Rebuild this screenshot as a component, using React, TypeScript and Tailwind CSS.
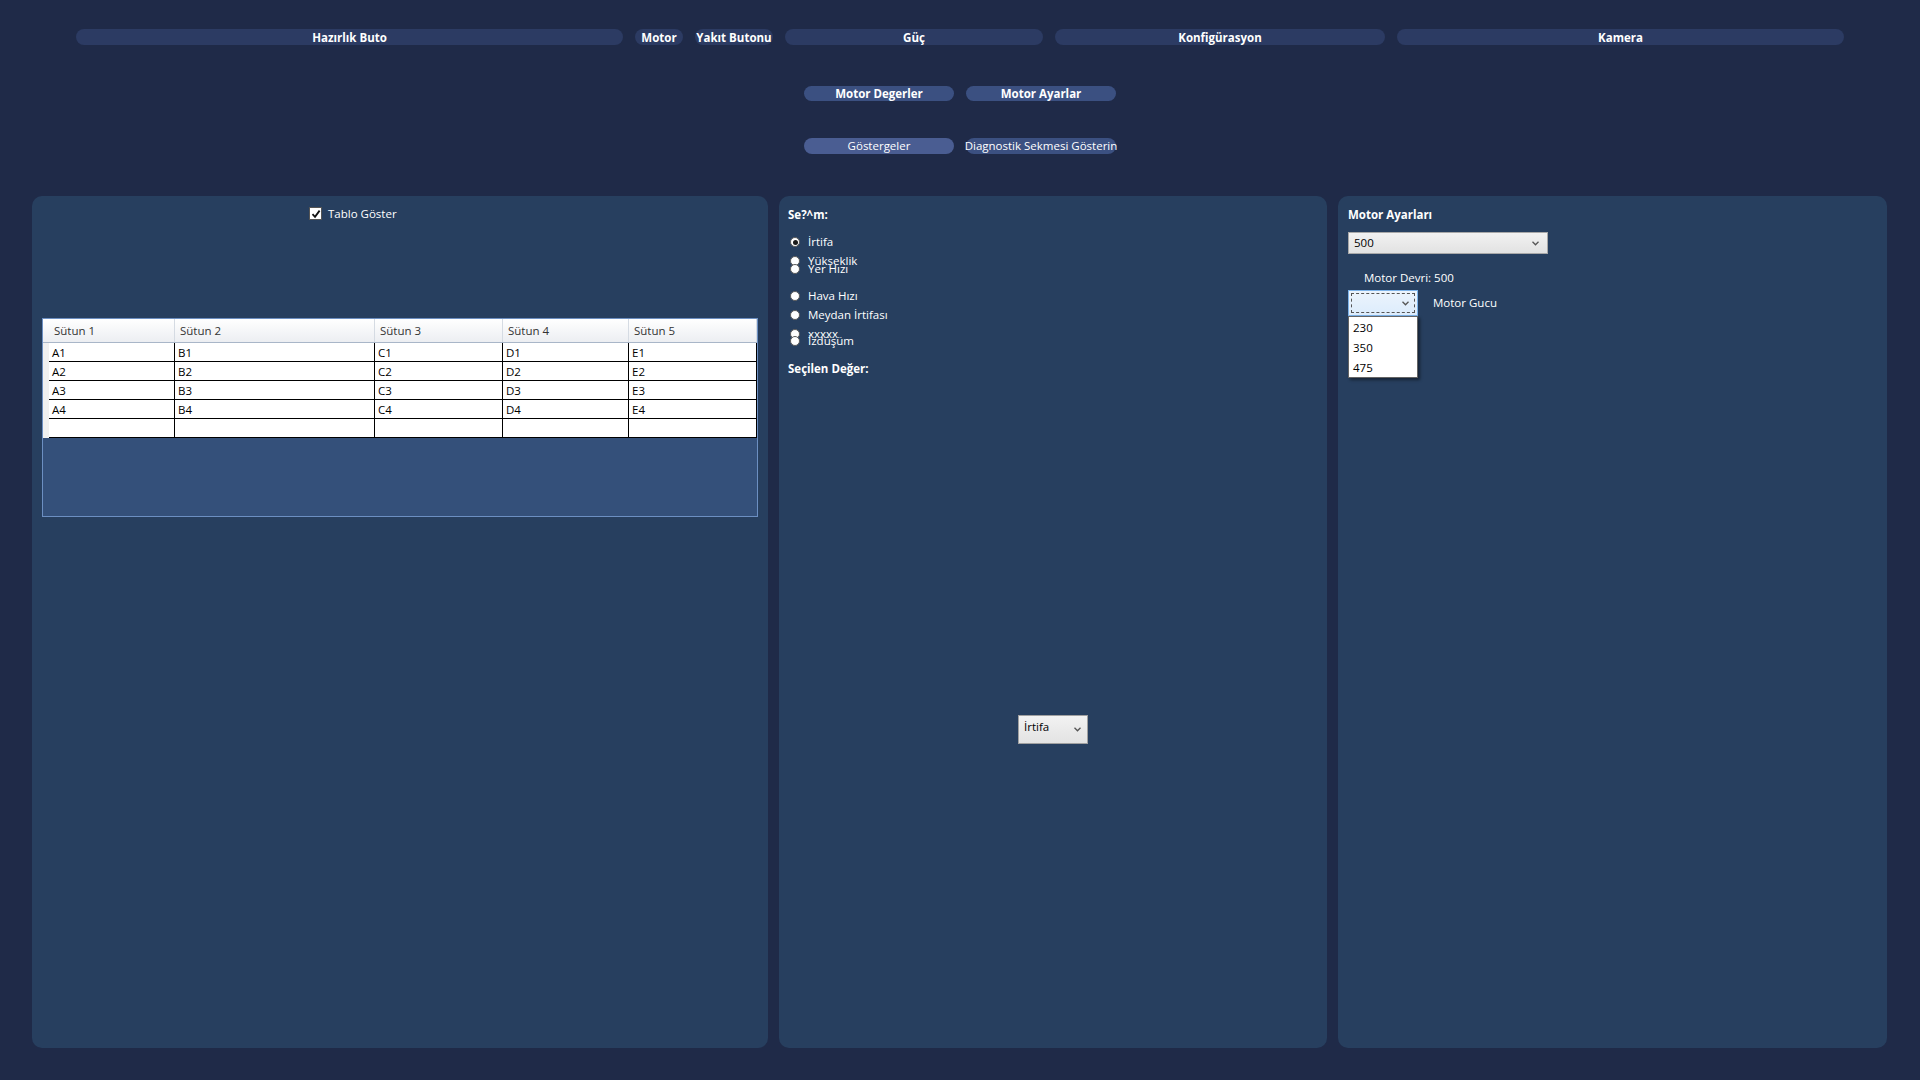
import React from 'react'

const font = "font-['Segoe_UI','Open_Sans',sans-serif]"

const topButtons = [
  { label: 'Hazırlık Buto', w: 'w-[547px]' },
  { label: 'Motor', w: 'w-[48px]' },
  { label: 'Yakıt Butonu', w: 'w-[78px]' },
  { label: 'Güç', w: 'w-[258px]' },
  { label: 'Konfigürasyon', w: 'w-[330px]' },
  { label: 'Kamera', w: 'w-[447px]' },
]

const columns = [
  { name: 'Sütun 1', w: 'w-[126px]' },
  { name: 'Sütun 2', w: 'w-[200px]' },
  { name: 'Sütun 3', w: 'w-[128px]' },
  { name: 'Sütun 4', w: 'w-[126px]' },
  { name: 'Sütun 5', w: 'w-[128px]' },
]

const rows = [
  ['A1', 'B1', 'C1', 'D1', 'E1'],
  ['A2', 'B2', 'C2', 'D2', 'E2'],
  ['A3', 'B3', 'C3', 'D3', 'E3'],
  ['A4', 'B4', 'C4', 'D4', 'E4'],
  ['', '', '', '', ''],
]

function Chevron() {
  return (
    <svg width="7" height="5" viewBox="0 0 7 5" className="shrink-0">
      <path d="M0.5 0.8 L3.5 3.8 L6.5 0.8" fill="none" stroke="#555" strokeWidth="1.3" />
    </svg>
  )
}

function Radio({ label, checked, className }: { label: string; checked?: boolean; className: string }) {
  return (
    <div className={`flex items-center h-[16px] ${className}`}>
      <span className="w-[10px] h-[10px] rounded-full bg-white border border-[#5a5a5a] flex items-center justify-center ml-[2px]">
        {checked && <span className="w-[5px] h-[5px] rounded-full bg-[#1a1a1a]" />}
      </span>
      <span className="ml-[8px] text-[11.5px] text-white leading-[16px]">{label}</span>
    </div>
  )
}

function DataTable() {
  return (
    <div className="mt-[96px] ml-[10px] w-[716px] h-[199px] bg-[#34507a] border border-[#6c8fc2]">
      <div className="flex h-[24px] bg-gradient-to-b from-white to-[#eceef2] border-b border-[#a9b6c8]">
        <div className="w-[6px]" />
        {columns.map((c) => (
          <div
            key={c.name}
            className={`${c.w} border-r border-[#d5dbe3] pl-[5px] flex items-center text-[11.5px] text-[#333]`}
          >
            {c.name}
          </div>
        ))}
      </div>
      {rows.map((r, i) => (
        <div key={i} className="flex h-[19px]">
          <div className="w-[6px] bg-[#f0f0f0]" />
          {r.map((cell, j) => (
            <div
              key={j}
              className={`${columns[j].w} bg-white border-r border-b border-black pl-[3px] flex items-center text-[11.5px] text-black`}
            >
              {cell}
            </div>
          ))}
        </div>
      ))}
    </div>
  )
}

export default function App() {
  return (
    <div className={`${font} w-[1920px] h-[1080px] bg-[#1f2a48] flex flex-col`}>
      <div className="flex justify-center gap-[12px] pt-[29px]">
        {topButtons.map((b) => (
          <div
            key={b.label}
            className={`${b.w} h-[16px] rounded-full bg-[#2c3b63] flex items-center justify-center pt-[2px] text-[11.5px] font-bold text-white`}
          >
            {b.label}
          </div>
        ))}
      </div>

      <div className="flex justify-center gap-[12px] mt-[41px]">
        <div className="w-[150px] h-[15px] rounded-full bg-[#3b5081] flex items-center justify-center text-[11.5px] font-bold text-white">
          Motor Degerler
        </div>
        <div className="w-[150px] h-[15px] rounded-full bg-[#3b5081] flex items-center justify-center text-[11.5px] font-bold text-white">
          Motor Ayarlar
        </div>
      </div>

      <div className="flex justify-center gap-[12px] mt-[37px]">
        <div className="w-[150px] h-[16px] rounded-full bg-[#4a5d92] flex items-center justify-center text-[11.5px] text-white">
          Göstergeler
        </div>
        <div className="w-[150px] h-[16px] shrink-0 rounded-full bg-[#3b5081] flex items-center justify-center text-[11.5px] text-white whitespace-nowrap">
          <span className="-mx-[4px]">Diagnostik Sekmesi Gösterin</span>
        </div>
      </div>

      <div className="flex gap-[11px] pl-[32px] mt-[42px] h-[852px]">
        {/* sol panel */}
        <div className="w-[736px] h-full rounded-[10px] bg-[#273f5f] flex flex-col">
          <div className="flex items-center pl-[277px] pt-[9px]">
            <span className="w-[13px] h-[13px] bg-white border border-[#555] flex items-center justify-center">
              <svg width="10" height="10" viewBox="0 0 10 10">
                <path d="M1.5 5.2 L4 7.8 L8.6 1.6" fill="none" stroke="#111" strokeWidth="1.8" />
              </svg>
            </span>
            <span className="ml-[6px] text-[11.5px] text-white">Tablo Göster</span>
          </div>
          <DataTable />
        </div>

        {/* orta panel */}
        <div className="w-[548px] h-full rounded-[10px] bg-[#273f5f] flex flex-col pl-[9px] pt-[11px]">
          <div className="h-[16px] text-[11.5px] font-bold text-white leading-[16px]">Se?^m:</div>
          <Radio label="İrtifa" checked className="mt-[11px]" />
          <Radio label="Yükseklik" className="mt-[3px]" />
          <Radio label="Yer Hızı" className="mt-[-8px]" />
          <Radio label="Hava Hızı" className="mt-[11px]" />
          <Radio label="Meydan İrtifası" className="mt-[3px]" />
          <Radio label="xxxxx" className="mt-[3px]" />
          <Radio label="İzdüşüm" className="mt-[-9px]" />
          <div className="mt-[12px] h-[16px] text-[11.5px] font-bold text-white leading-[16px]">Seçilen Değer:</div>
          <div className="mt-[338px] self-center -ml-[9px] w-[70px] h-[29px] bg-gradient-to-b from-[#f2f2f2] to-[#e3e3e3] border border-[#a0a0a0] flex items-center justify-between pl-[5px] pr-[6px]">
            <span className="text-[11.5px] text-black mb-[5px]">İrtifa</span>
            <Chevron />
          </div>
        </div>

        {/* sağ panel */}
        <div className="w-[549px] h-full rounded-[10px] bg-[#273f5f] flex flex-col pl-[10px] pt-[11px]">
          <div className="h-[16px] text-[11.5px] font-bold text-white leading-[16px]">Motor Ayarları</div>
          <div className="mt-[9px] w-[200px] h-[22px] bg-gradient-to-b from-[#f2f2f2] to-[#e2e2e2] border border-[#a8a8a8] flex items-center justify-between pl-[5px] pr-[8px]">
            <span className="text-[11.5px] text-black">500</span>
            <Chevron />
          </div>
          <div className="mt-[16px] ml-[16px] text-[11.5px] text-white leading-[16px]">Motor Devri: 500</div>
          <div className="flex items-center mt-[4px]">
            <div className="relative w-[70px] h-[26px] bg-gradient-to-b from-[#ecf4fc] to-[#dcecfc] border border-[#7eb4ea] p-[2px]">
              <div className="w-full h-full border border-dashed border-[#555] flex items-center justify-end pr-[5px]">
                <Chevron />
              </div>
              <div className="absolute left-[-1px] top-[25px] w-[70px] h-[62px] bg-white border border-[#646464] shadow-[2px_2px_3px_rgba(0,0,0,0.45)] flex flex-col pl-[4px] pt-[1px]">
                <span className="h-[20px] leading-[20px] text-[11.5px] text-black">230</span>
                <span className="h-[20px] leading-[20px] text-[11.5px] text-black">350</span>
                <span className="h-[20px] leading-[20px] text-[11.5px] text-black">475</span>
              </div>
            </div>
            <span className="ml-[15px] text-[11.5px] text-white">Motor Gucu</span>
          </div>
        </div>
      </div>
    </div>
  )
}
